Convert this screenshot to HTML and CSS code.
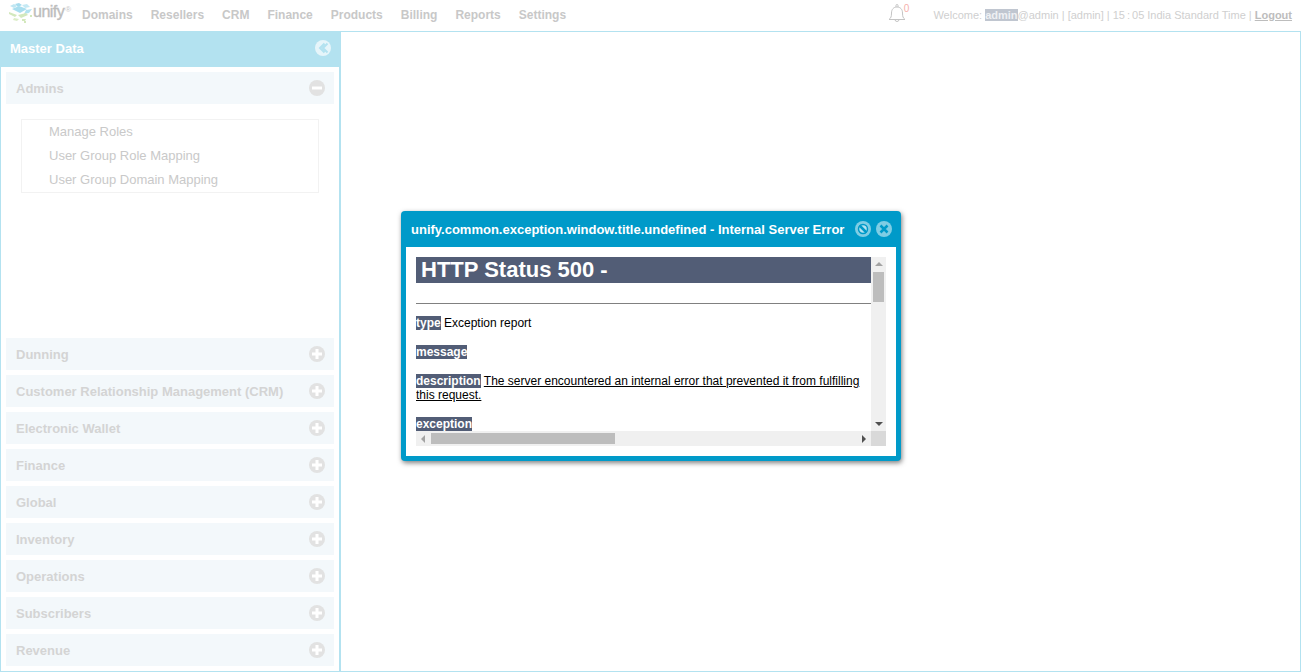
FILE: index.html
```html
<!DOCTYPE html>
<html lang="en">
<head>
  <meta charset="UTF-8">
  <title>Unify</title>
  <link rel="stylesheet" href="styles.css">
</head>
<body>

  <div class="topbar">
    <div class="logo">
      <svg class="logo-mark" width="24" height="20" viewBox="0 0 24 20">
        <path d="M1 3l4-2 3 2-3 2z" fill="#bfe6f2"/>
        <path d="M6 1l4-1 3 2-4 2z" fill="#a6dcee"/>
        <path d="M3 6l7-3 8 3-7 4z" fill="#a9deef"/>
        <path d="M13 2l5-1 3 3-5 1z" fill="#c5e9f4"/>
        <path d="M17 7l6-1-3 4-5 1z" fill="#b3e2f0"/>
        <path d="M0 9l8 3-2 2-6-3z" fill="#d3e8bd"/>
        <path d="M9 12l8-2 2 2-7 3z" fill="#d3e8bd"/>
        <path d="M5 15l5 1-2 2-4-1z" fill="#dcedc8"/>
        <path d="M13 16l4 0-1 2-3 0z" fill="#d3e8bd"/>
        <path d="M21 12h2v2h-2zM15 18h2v2h-2z" fill="#d3e8bd"/>
      </svg>
      <span class="logo-text">unify</span><span class="logo-reg">®</span>
    </div>
    <nav class="mainnav">
      <a>Domains</a>
      <a>Resellers</a>
      <a>CRM</a>
      <a>Finance</a>
      <a>Products</a>
      <a>Billing</a>
      <a>Reports</a>
      <a>Settings</a>
    </nav>
    <div class="bell">
      <svg width="18" height="20" viewBox="0 0 18 20" fill="none" stroke="#c4c4c4" stroke-width="1">
        <path d="M1 16.500c2-1.500 2.500-3 2.500-6.500 0-3.500 2-6 5.500-6s5.500 2.500 5.500 6c0 3.500.5 5 2.500 6.500z"/>
        <path d="M8 4V2.500a1 1 0 0 1 2 0V4M7 16.500a2 2 0 0 0 4 0"/>
      </svg>
      <span class="bell-count">0</span>
    </div>
    <div class="welcome">Welcome: <span class="welcome-user">admin</span>@admin | [admin] | 15<span class="colon">:</span>05 India Standard Time | <a class="logout">Logout</a></div>
  </div>

  <div class="workspace">
    <aside class="sidebar">
      <div class="sidebar-head">
        <span>Master Data</span>
        <svg class="round-icon" width="16" height="16" viewBox="0 0 16 16">
          <circle cx="8" cy="8" r="8" fill="#e6f5fa"/>
          <path d="M9.500 3.500L5 8l4.500 4.500M12.500 3.500L8 8l4.500 4.500" fill="none" stroke="#b3e2f0" stroke-width="2"/>
        </svg>
      </div>
      <div class="accordion">
        <div class="acc-row">
          <span>Admins</span>
          <svg class="round-icon" width="16" height="16" viewBox="0 0 16 16"><circle cx="8" cy="8" r="8" fill="#e2e2e2"/><path d="M3 8h10" stroke="#fff" stroke-width="3"/></svg>
        </div>
        <div class="acc-body">
          <ul class="acc-list">
            <li>Manage Roles</li>
            <li>User Group Role Mapping</li>
            <li>User Group Domain Mapping</li>
          </ul>
        </div>
        <div class="acc-row"><span>Dunning</span><svg class="round-icon" width="16" height="16" viewBox="0 0 16 16"><circle cx="8" cy="8" r="8" fill="#e2e2e2"/><path d="M3 8h10M8 3v10" stroke="#fff" stroke-width="3"/></svg></div>
        <div class="acc-row"><span>Customer Relationship Management (CRM)</span><svg class="round-icon" width="16" height="16" viewBox="0 0 16 16"><circle cx="8" cy="8" r="8" fill="#e2e2e2"/><path d="M3 8h10M8 3v10" stroke="#fff" stroke-width="3"/></svg></div>
        <div class="acc-row"><span>Electronic Wallet</span><svg class="round-icon" width="16" height="16" viewBox="0 0 16 16"><circle cx="8" cy="8" r="8" fill="#e2e2e2"/><path d="M3 8h10M8 3v10" stroke="#fff" stroke-width="3"/></svg></div>
        <div class="acc-row"><span>Finance</span><svg class="round-icon" width="16" height="16" viewBox="0 0 16 16"><circle cx="8" cy="8" r="8" fill="#e2e2e2"/><path d="M3 8h10M8 3v10" stroke="#fff" stroke-width="3"/></svg></div>
        <div class="acc-row"><span>Global</span><svg class="round-icon" width="16" height="16" viewBox="0 0 16 16"><circle cx="8" cy="8" r="8" fill="#e2e2e2"/><path d="M3 8h10M8 3v10" stroke="#fff" stroke-width="3"/></svg></div>
        <div class="acc-row"><span>Inventory</span><svg class="round-icon" width="16" height="16" viewBox="0 0 16 16"><circle cx="8" cy="8" r="8" fill="#e2e2e2"/><path d="M3 8h10M8 3v10" stroke="#fff" stroke-width="3"/></svg></div>
        <div class="acc-row"><span>Operations</span><svg class="round-icon" width="16" height="16" viewBox="0 0 16 16"><circle cx="8" cy="8" r="8" fill="#e2e2e2"/><path d="M3 8h10M8 3v10" stroke="#fff" stroke-width="3"/></svg></div>
        <div class="acc-row"><span>Subscribers</span><svg class="round-icon" width="16" height="16" viewBox="0 0 16 16"><circle cx="8" cy="8" r="8" fill="#e2e2e2"/><path d="M3 8h10M8 3v10" stroke="#fff" stroke-width="3"/></svg></div>
        <div class="acc-row"><span>Revenue</span><svg class="round-icon" width="16" height="16" viewBox="0 0 16 16"><circle cx="8" cy="8" r="8" fill="#e2e2e2"/><path d="M3 8h10M8 3v10" stroke="#fff" stroke-width="3"/></svg></div>
      </div>
    </aside>
    <main class="content"></main>
  </div>

  <div class="dialog">
    <div class="dialog-head">
      <span class="dialog-title">unify.common.exception.window.title.undefined - Internal Server Error</span>
      <svg class="round-icon" width="16" height="16" viewBox="0 0 16 16"><circle cx="8" cy="8" r="8" fill="#7fcde4"/><circle cx="8" cy="8" r="4.500" fill="#b5e2f0" stroke="#009ac9" stroke-width="1.500"/><path d="M4.500 4.500l7 7" stroke="#009ac9" stroke-width="2.500"/></svg>
      <svg class="round-icon" width="16" height="16" viewBox="0 0 16 16"><circle cx="8" cy="8" r="8" fill="#7fcde4"/><path d="M4.500 4.500l7 7M11.500 4.500l-7 7" stroke="#009ac9" stroke-width="2.500"/></svg>
    </div>
    <div class="dialog-body">
      <div class="frame">
        <div class="frame-view">
          <h1>HTTP Status 500 - </h1>
          <hr>
          <p><b>type</b> Exception report</p>
          <p><b>message</b></p>
          <p><b>description</b> <u>The server encountered an internal error that prevented it from fulfilling</u> <u>this request.</u></p>
          <p><b>exception</b></p>
        </div>
        <div class="vbar">
          <span class="arrow arrow-up"></span>
          <div class="vtrack"><div class="vthumb"></div></div>
          <span class="arrow arrow-down"></span>
        </div>
        <div class="hbar">
          <span class="arrow arrow-left"></span>
          <div class="htrack"><div class="hthumb"></div></div>
          <span class="arrow arrow-right"></span>
        </div>
        <div class="corner"></div>
      </div>
    </div>
  </div>

</body>
</html>
```

FILE: styles.css
```css
html, body {
  height: 100%;
}

body {
  margin: 0;
  background: #fff;
  font-family: "Liberation Sans", Arial, sans-serif;
  font-size: 12px;
  overflow: hidden;
}

.topbar {
  height: 31px;
  display: flex;
  align-items: center;
  color: #c6c6c6;
}

.logo {
  width: 82px;
  height: 31px;
  flex: none;
  padding-left: 9px;
  box-sizing: border-box;
  display: flex;
  align-items: flex-start;
}

.logo-mark {
  margin-top: 3px;
  flex: none;
}

.logo-text {
  font-size: 16px;
  color: #bdbdbd;
  -webkit-text-stroke: 0.4px #bdbdbd;
  margin-top: 3px;
  letter-spacing: -0.5px;
}

.logo-reg {
  font-size: 8px;
  margin-top: 5px;
  margin-left: 1px;
  color: #c9c9c9;
}

.mainnav {
  display: flex;
  gap: 18px;
  font-weight: bold;
  color: #c8c8c8;
  margin-top: -1px;
}

.bell {
  margin-left: auto;
  display: flex;
  align-items: flex-start;
  height: 22px;
  margin-top: -4px;
}

.bell-count {
  font-size: 10px;
  color: #f6b1ac;
  margin-left: -2px;
}

.welcome {
  font-size: 11px;
  color: #cfcfcf;
  margin-left: 24px;
  margin-right: 9px;
  margin-top: -2px;
}

.welcome-user {
  background: #c0c6d0;
  color: #eef0f3;
  font-weight: bold;
}

.colon {
  margin: 0 2px;
}

.logout {
  font-weight: bold;
  text-decoration: underline;
  color: #bdbdbd;
}

.workspace {
  display: flex;
  height: 641px;
}

.sidebar {
  width: 341px;
  flex: none;
  box-sizing: border-box;
  border: 1px solid #b3e2f0;
  border-top: none;
  border-right-width: 2px;
  display: flex;
  flex-direction: column;
}

.sidebar-head {
  height: 36px;
  padding-bottom: 2px;
  box-sizing: border-box;
  background: #b3e2f0;
  margin-left: -1px;
  margin-right: -1px;
  padding-left: 10px;
  padding-right: 2px;
  display: flex;
  justify-content: space-between;
  align-items: center;
  color: #fff;
  font-size: 13px;
  font-weight: bold;
}

.sidebar-head .round-icon {
  margin-right: 7px;
}

.round-icon {
  flex: none;
}

.accordion {
  padding: 5px 5px 0;
  display: flex;
  flex-direction: column;
  gap: 5px;
}

.acc-row {
  height: 32px;
  background: #f3f8fb;
  padding: 0 9px 0 10px;
  display: flex;
  justify-content: space-between;
  align-items: center;
  color: #d4d4d4;
  font-size: 13px;
  font-weight: bold;
}

.acc-body {
  height: 224px;
  padding: 10px 15px 0;
  box-sizing: border-box;
}

.acc-list {
  margin: 0;
  list-style: none;
  border: 1px solid #f2f2f2;
  padding: 0 0 0 27px;
  color: #c9c9c9;
  font-size: 13px;
  line-height: 24px;
}

.content {
  flex: 1;
  border: 1px solid #b3e2f0;
  border-left: none;
}

.dialog {
  position: absolute;
  left: 401px;
  top: 211px;
  width: 500px;
  height: 250px;
  box-sizing: border-box;
  background: #009ac9;
  border-radius: 4px;
  box-shadow: 1px 2px 5px rgba(0, 0, 0, 0.5);
  padding: 0 5px 5px;
  display: flex;
  flex-direction: column;
}

.dialog-head {
  height: 36px;
  flex: none;
  display: flex;
  align-items: center;
  gap: 5px;
  padding-left: 5px;
  color: #fff;
  font-size: 13px;
  font-weight: bold;
}

.dialog-title {
  margin-right: 6px;
}

.dialog-body {
  flex: 1;
  background: #fff;
  padding: 10px;
}

.frame {
  width: 470px;
  height: 189px;
  display: grid;
  grid-template-columns: 455px 15px;
  grid-template-rows: 174px 15px;
}

.frame-view {
  overflow: hidden;
  font-size: 12px;
  color: #000;
}

.frame-view h1 {
  margin: 0;
  padding-left: 5px;
  height: 26px;
  line-height: 26px;
  font-size: 22px;
  background: #525d76;
  color: #fff;
}

.frame-view hr {
  margin: 20px 0 12px;
  border: none;
  height: 1px;
  background: #808080;
}

.frame-view p {
  margin: 0 0 15px;
  line-height: 14px;
}

.frame-view b {
  background: #525d76;
  color: #fff;
}

.vbar {
  background: #f0f0f0;
  display: flex;
  flex-direction: column;
  align-items: center;
}

.vtrack {
  flex: 1;
  width: 100%;
}

.vthumb {
  width: 11px;
  height: 30px;
  margin: 2px auto 0;
  background: #bdbdbd;
}

.hbar {
  background: #f0f0f0;
  display: flex;
  align-items: center;
}

.htrack {
  flex: 1;
  height: 100%;
}

.hthumb {
  width: 184px;
  height: 11px;
  margin-top: 2px;
  background: #bdbdbd;
}

.corner {
  background: #d9d9d9;
}

.arrow {
  flex: none;
  width: 0;
  height: 0;
  border-style: solid;
  border-color: transparent;
}

.arrow-up {
  margin: 5px 0 4px;
  border-width: 0 4px 4px;
  border-bottom-color: #a3a3a3;
}

.arrow-down {
  margin: 4px 0 5px;
  border-width: 4px 4px 0;
  border-top-color: #505050;
}

.arrow-left {
  margin: 0 6px 0 5px;
  border-width: 4px 4px 4px 0;
  border-right-color: #a3a3a3;
}

.arrow-right {
  margin: 0 5px 0 4px;
  border-width: 4px 0 4px 4px;
  border-left-color: #505050;
}
```
